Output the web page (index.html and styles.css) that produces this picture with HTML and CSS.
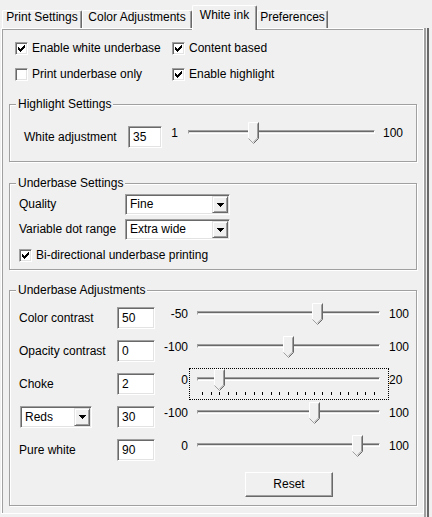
FILE: index.html
```html
<!DOCTYPE html>
<html lang="en">
<head>
<meta charset="utf-8">
<title>White ink</title>
<link rel="stylesheet" href="styles.css">
</head>
<body>
<div class="window">
  <div class="tabbar">
    <div class="tab tab-print">Print Settings</div>
    <div class="tab tab-color">Color Adjustments</div>
    <div class="tab tab-white">White ink</div>
    <div class="tab tab-prefs">Preferences</div>
  </div>

  <div class="panel">
    <div class="checks">
      <div class="chk"><span class="box"><svg width="7" height="7" viewBox="0 0 7 7"><path d="M0 2h1v3H0zM1 3h1v3H1zM2 4h1v3H2zM3 3h1v3H3zM4 2h1v3H4zM5 1h1v3H5zM6 0h1v3H6z"/></svg></span>Enable white underbase</div>
      <div class="chk"><span class="box"><svg width="7" height="7" viewBox="0 0 7 7"><path d="M0 2h1v3H0zM1 3h1v3H1zM2 4h1v3H2zM3 3h1v3H3zM4 2h1v3H4zM5 1h1v3H5zM6 0h1v3H6z"/></svg></span>Content based</div>
      <div class="chk"><span class="box"></span>Print underbase only</div>
      <div class="chk"><span class="box"><svg width="7" height="7" viewBox="0 0 7 7"><path d="M0 2h1v3H0zM1 3h1v3H1zM2 4h1v3H2zM3 3h1v3H3zM4 2h1v3H4zM5 1h1v3H5zM6 0h1v3H6z"/></svg></span>Enable highlight</div>
    </div>

    <div class="group g-high">
      <div class="legend">Highlight Settings</div>
      <div class="hrow">
        <span class="lbl">White adjustment</span>
        <span class="edit edit-s">35</span>
        <span class="min">1</span>
        <div class="slider">
          <div class="track"></div>
          <svg class="thumb" style="left:calc((100% - 11px) * 0.3434)" width="11" height="22" viewBox="0 0 11 22"><polygon points="0.5,0.5 10.5,0.5 10.5,16.5 5.5,21.5 0.5,16.5" fill="#f0f0f0"/><polyline points="0.5,16.5 0.5,0.5 10.5,0.5" fill="none" stroke="#fff"/><polyline points="10.5,0.5 10.5,16.5 5.5,21.5" fill="none" stroke="#696969"/><polyline points="9.5,1.5 9.5,16 5.5,20" fill="none" stroke="#a0a0a0"/><polyline points="0.5,16.5 5.5,21.5" fill="none" stroke="#a0a0a0"/></svg>
        </div>
        <span class="max">100</span>
      </div>
    </div>

    <div class="group g-set">
      <div class="legend">Underbase Settings</div>
      <div class="srow">
        <span class="lbl">Quality</span>
        <div class="combo"><span class="val">Fine</span><span class="btn"><svg width="7" height="4" viewBox="0 0 7 4"><path d="M0 0h7v1H0zM1 1h5v1H1zM2 2h3v1H2zM3 3h1v1H3z"/></svg></span></div>
      </div>
      <div class="srow">
        <span class="lbl">Variable dot range</span>
        <div class="combo"><span class="val">Extra wide</span><span class="btn"><svg width="7" height="4" viewBox="0 0 7 4"><path d="M0 0h7v1H0zM1 1h5v1H1zM2 2h3v1H2zM3 3h1v1H3z"/></svg></span></div>
      </div>
      <div class="chk chk-row"><span class="box"><svg width="7" height="7" viewBox="0 0 7 7"><path d="M0 2h1v3H0zM1 3h1v3H1zM2 4h1v3H2zM3 3h1v3H3zM4 2h1v3H4zM5 1h1v3H5zM6 0h1v3H6z"/></svg></span>Bi-directional underbase printing</div>
    </div>

    <div class="group g-adj">
      <div class="legend">Underbase Adjustments</div>

      <div class="arow first">
        <span class="lbl">Color contrast</span>
        <span class="edit edit-m">50</span>
        <span class="min">-50</span>
        <div class="slider">
          <div class="track"></div>
          <svg class="thumb" style="left:calc((100% - 11px) * 0.6667)" width="11" height="22" viewBox="0 0 11 22"><polygon points="0.5,0.5 10.5,0.5 10.5,16.5 5.5,21.5 0.5,16.5" fill="#f0f0f0"/><polyline points="0.5,16.5 0.5,0.5 10.5,0.5" fill="none" stroke="#fff"/><polyline points="10.5,0.5 10.5,16.5 5.5,21.5" fill="none" stroke="#696969"/><polyline points="9.5,1.5 9.5,16 5.5,20" fill="none" stroke="#a0a0a0"/><polyline points="0.5,16.5 5.5,21.5" fill="none" stroke="#a0a0a0"/></svg>
        </div>
        <span class="max">100</span>
      </div>

      <div class="arow">
        <span class="lbl">Opacity contrast</span>
        <span class="edit edit-m">0</span>
        <span class="min">-100</span>
        <div class="slider">
          <div class="track"></div>
          <svg class="thumb" style="left:calc((100% - 11px) * 0.5)" width="11" height="22" viewBox="0 0 11 22"><polygon points="0.5,0.5 10.5,0.5 10.5,16.5 5.5,21.5 0.5,16.5" fill="#f0f0f0"/><polyline points="0.5,16.5 0.5,0.5 10.5,0.5" fill="none" stroke="#fff"/><polyline points="10.5,0.5 10.5,16.5 5.5,21.5" fill="none" stroke="#696969"/><polyline points="9.5,1.5 9.5,16 5.5,20" fill="none" stroke="#a0a0a0"/><polyline points="0.5,16.5 5.5,21.5" fill="none" stroke="#a0a0a0"/></svg>
        </div>
        <span class="max">100</span>
      </div>

      <div class="arow">
        <span class="lbl">Choke</span>
        <span class="edit edit-m">2</span>
        <span class="min">0</span>
        <div class="slider">
          <div class="focus"></div>
          <div class="track"></div>
          <svg class="ticks" width="183" height="3" viewBox="0 0 183 3"><path d="M5 0h1v3h-1zM14 0h1v3h-1zM22 0h1v3h-1zM31 0h1v3h-1zM39 0h1v3h-1zM48 0h1v3h-1zM57 0h1v3h-1zM65 0h1v3h-1zM74 0h1v3h-1zM82 0h1v3h-1zM91 0h1v3h-1zM100 0h1v3h-1zM108 0h1v3h-1zM117 0h1v3h-1zM125 0h1v3h-1zM134 0h1v3h-1zM143 0h1v3h-1zM151 0h1v3h-1zM160 0h1v3h-1zM168 0h1v3h-1zM177 0h1v3h-1z"/></svg>
          <svg class="thumb" style="left:calc((100% - 11px) * 0.1)" width="11" height="22" viewBox="0 0 11 22"><polygon points="0.5,0.5 10.5,0.5 10.5,16.5 5.5,21.5 0.5,16.5" fill="#f0f0f0"/><polyline points="0.5,16.5 0.5,0.5 10.5,0.5" fill="none" stroke="#fff"/><polyline points="10.5,0.5 10.5,16.5 5.5,21.5" fill="none" stroke="#696969"/><polyline points="9.5,1.5 9.5,16 5.5,20" fill="none" stroke="#a0a0a0"/><polyline points="0.5,16.5 5.5,21.5" fill="none" stroke="#a0a0a0"/></svg>
        </div>
        <span class="max">20</span>
      </div>

      <div class="arow">
        <div class="combo combo-reds"><span class="val">Reds</span><span class="btn"><svg width="7" height="4" viewBox="0 0 7 4"><path d="M0 0h7v1H0zM1 1h5v1H1zM2 2h3v1H2zM3 3h1v1H3z"/></svg></span></div>
        <span class="edit edit-m">30</span>
        <span class="min">-100</span>
        <div class="slider">
          <div class="track"></div>
          <svg class="thumb" style="left:calc((100% - 11px) * 0.65)" width="11" height="22" viewBox="0 0 11 22"><polygon points="0.5,0.5 10.5,0.5 10.5,16.5 5.5,21.5 0.5,16.5" fill="#f0f0f0"/><polyline points="0.5,16.5 0.5,0.5 10.5,0.5" fill="none" stroke="#fff"/><polyline points="10.5,0.5 10.5,16.5 5.5,21.5" fill="none" stroke="#696969"/><polyline points="9.5,1.5 9.5,16 5.5,20" fill="none" stroke="#a0a0a0"/><polyline points="0.5,16.5 5.5,21.5" fill="none" stroke="#a0a0a0"/></svg>
        </div>
        <span class="max">100</span>
      </div>

      <div class="arow">
        <span class="lbl">Pure white</span>
        <span class="edit edit-m">90</span>
        <span class="min">0</span>
        <div class="slider">
          <div class="track"></div>
          <svg class="thumb" style="left:calc((100% - 11px) * 0.9)" width="11" height="22" viewBox="0 0 11 22"><polygon points="0.5,0.5 10.5,0.5 10.5,16.5 5.5,21.5 0.5,16.5" fill="#f0f0f0"/><polyline points="0.5,16.5 0.5,0.5 10.5,0.5" fill="none" stroke="#fff"/><polyline points="10.5,0.5 10.5,16.5 5.5,21.5" fill="none" stroke="#696969"/><polyline points="9.5,1.5 9.5,16 5.5,20" fill="none" stroke="#a0a0a0"/><polyline points="0.5,16.5 5.5,21.5" fill="none" stroke="#a0a0a0"/></svg>
        </div>
        <span class="max">100</span>
      </div>

      <button class="reset" type="button">Reset</button>
    </div>
  </div>
</div>
</body>
</html>
```

FILE: styles.css
```css
* { box-sizing: border-box; }
html, body { margin: 0; padding: 0; }
body {
  background: #f0f0f0;
  font-family: "Liberation Sans", Arial, sans-serif;
  font-size: 12px;
  color: #000;
  width: 432px;
  height: 517px;
  overflow: hidden;
}
.window {
  min-height: 517px;
  background: linear-gradient(to right, transparent 424px, #a0a0a0 424px 426px, transparent 426px 427px, #696969 427px 429px, transparent 429px) no-repeat 0 28px / 100% 100%;
}

/* Tabs */
.tabbar {
  display: flex;
  align-items: flex-end;
  height: 28px;
  padding-left: 2px;
}
.tab {
  height: 18px;
  background: #f0f0f0;
  border-top: 1px solid #fff;
  border-left: 1px solid #fff;
  border-right: 1px solid #696969;
  box-shadow: inset -1px 0 #a0a0a0;
  border-radius: 2px 2px 0 0;
  text-align: center;
  line-height: 13px;
  white-space: nowrap;
}
.tab-print { width: 80px; }
.tab-color { width: 110px; }
.tab-white {
  width: 65px;
  height: 25px;
  margin-bottom: -2px;
  padding-top: 3px;
  position: relative;
  z-index: 1;
}
.tab-prefs { width: 71px; }

/* Panel */
.panel {
  margin-left: 1px;
  width: 423px;
  border: 1px solid #fff;
  box-shadow: inset 1px 1px #a0a0a0;
  padding-bottom: 7px;
}

/* Checkboxes */
.checks {
  display: grid;
  grid-template-columns: 157px auto;
  grid-auto-rows: 26px;
  margin: 6px 0 0 13px;
}
.chk {
  display: flex;
  align-items: center;
  gap: 4px;
  white-space: nowrap;
}
.box {
  flex: none;
  width: 13px;
  height: 13px;
  background: #fff;
  border: 1px solid;
  border-color: #a0a0a0 #fff #fff #a0a0a0;
  box-shadow: inset 1px 1px #696969, inset -1px -1px #e3e3e3;
}
.box svg { display: block; margin: 2px 0 0 2px; }

/* Group boxes */
.group {
  margin: 17px 6px 0 7px;
  border: 1px solid #a0a0a0;
  box-shadow: inset 1px 1px #fff, 1px 1px #fff;
}
.legend {
  width: max-content;
  margin: -8px 0 0 6px;
  padding: 0 2px;
  line-height: 14px;
  background: #f0f0f0;
}
.g-high { padding-bottom: 13px; }
.g-set { margin-top: 21px; padding-bottom: 6px; }
.g-adj { margin-top: 20px; padding-bottom: 8px; }

/* Edit boxes */
.edit {
  flex: none;
  height: 22px;
  background: #fff;
  border: 1px solid;
  border-color: #a0a0a0 #fff #fff #a0a0a0;
  box-shadow: inset 1px 1px #696969, inset -1px -1px #e3e3e3;
  padding-left: 4px;
  line-height: 20px;
}
.edit-s { width: 34px; }
.edit-m { width: 38px; }

/* Sliders */
.slider {
  position: relative;
  flex: none;
  height: 22px;
}
.track {
  margin-top: 8px;
  height: 4px;
  border: 1px solid;
  border-color: #a0a0a0 #fff #fff #a0a0a0;
  background: linear-gradient(#696969 50%, #e3e3e3 50%);
}
.thumb {
  position: absolute;
  top: 0;
  display: block;
}
.ticks {
  position: absolute;
  left: 0;
  top: 23px;
  display: block;
}
.focus {
  position: absolute;
  left: -8px;
  right: -9px;
  top: -1px;
  bottom: -9px;
  border: 1px dotted #000;
}

/* Highlight row */
.hrow {
  display: flex;
  align-items: flex-start;
  margin-top: 15px;
  padding-left: 14px;
}
.hrow .lbl { width: 104px; line-height: 22px; white-space: nowrap; }
.hrow .min { width: 16px; text-align: right; line-height: 14px; }
.hrow .slider { width: 187px; margin: -4px 0 0 10px; }
.hrow .max { margin-left: 8px; line-height: 14px; }

/* Underbase settings rows */
.srow {
  display: flex;
  align-items: center;
  padding-left: 9px;
  margin-top: 4px;
}
.srow .lbl { width: 106px; line-height: 21px; white-space: nowrap; }
.combo {
  flex: none;
  display: flex;
  width: 105px;
  height: 21px;
  padding: 1px;
  background: #fff;
  border: 1px solid;
  border-color: #a0a0a0 #fff #fff #a0a0a0;
  box-shadow: inset 1px 1px #696969, inset -1px -1px #e3e3e3;
}
.combo .val { flex: 1; padding-left: 3px; line-height: 17px; white-space: nowrap; }
.combo .btn {
  width: 16px;
  display: flex;
  align-items: center;
  justify-content: center;
  background: #f0f0f0;
  border: 1px solid;
  border-color: #e3e3e3 #696969 #696969 #e3e3e3;
  box-shadow: inset 1px 1px #fff, inset -1px -1px #a0a0a0;
}
.chk-row {
  margin-top: 7px;
  padding-left: 9px;
  height: 16px;
}

/* Underbase adjustment rows */
.arow {
  display: flex;
  align-items: flex-start;
  height: 22px;
  padding-left: 9px;
  margin-top: 11px;
}
.arow.first { margin-top: 10px; }
.arow .lbl { width: 98px; line-height: 22px; white-space: nowrap; }
.arow .min { width: 33px; text-align: right; line-height: 14px; }
.arow .slider { width: 183px; margin: -4px 0 0 9px; }
.arow .max { margin-left: 9px; line-height: 14px; }
.combo-reds {
  width: 72px;
  height: 22px;
  margin: 0 25px 0 1px;
}
.combo-reds .val { line-height: 18px; }

/* Reset button */
.reset {
  display: block;
  margin: 11px 0 0 235px;
  width: 88px;
  height: 25px;
  padding: 0;
  font: inherit;
  color: #000;
  text-align: center;
  line-height: 23px;
  background: #f0f0f0;
  border: 1px solid;
  border-color: #fff #696969 #696969 #fff;
  box-shadow: inset -1px -1px #a0a0a0;
  border-radius: 0;
}
```
